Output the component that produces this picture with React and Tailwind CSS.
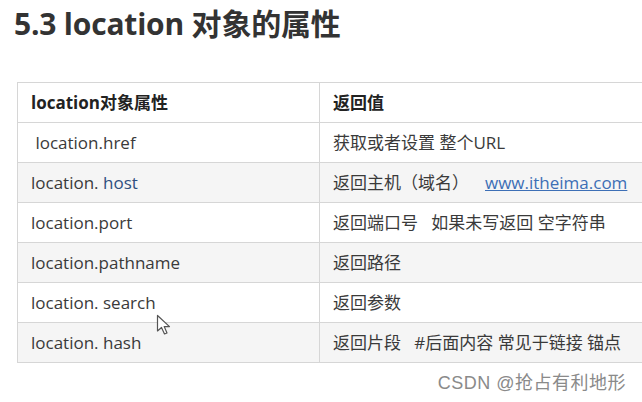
import React from 'react';

const rows = [
    { key: ' location.href', value: '获取或者设置 整个URL', shade: false },
    { key: 'location. ', blue: 'host', value: '返回主机（域名）', link: 'www.itheima.com', shade: true },
    { key: 'location.port', value: '返回端口号   如果未写返回 空字符串', shade: false },
    { key: 'location.pathname', value: '返回路径', shade: true },
    { key: 'location. search', value: '返回参数', shade: false },
    { key: 'location. hash', value: '返回片段   #后面内容 常见于链接 锚点', shade: true },
];

function Cursor() {
    return (
        <svg className="absolute left-[156px] top-[314px]" width="16" height="22" viewBox="0 0 16 22">
            <path d="M1.5 1.5 L1.5 17 L5.5 13.5 L8.5 20 L11 19 L8.2 12.6 L13.5 12.6 Z" fill="white" stroke="#555" strokeWidth="1.2" strokeLinejoin="round" />
        </svg>
    );
}

export default function App() {
    return (
        <div className="relative w-[642px] h-[402px] overflow-hidden bg-white text-[#3a3a3a]" style={{ fontFamily: '"Open Sans", "Noto Sans CJK SC", sans-serif' }}>
            {/* Title */}
            <h1 className="pl-[14px] pt-[2px] h-[82px] text-[30px] font-bold text-[#333] leading-[44px] tracking-[-0.2px]">
                5.3 location 对象的属性
            </h1>

            {/* Table */}
            <div className="ml-[17px] w-[640px] border border-[#d6d6d6] text-[17px]">
                <div className="flex h-[39px] items-center font-bold text-[#222]">
                    <div className="w-[302px] pl-[13px] border-r border-[#d6d6d6] h-full flex items-center">location对象属性</div>
                    <div className="pl-[13px]">返回值</div>
                </div>
                {rows.map((row, i) => (
                    <div key={i} className={`flex h-[40px] items-center border-t border-[#d6d6d6] ${row.shade ? 'bg-[#f5f5f5]' : 'bg-white'}`}>
                        <div className="w-[302px] pl-[13px] border-r border-[#d6d6d6] h-full flex items-center whitespace-pre">
                            {row.key}
                            {row.blue && <span className="text-[#2f4f7f]">{row.blue}</span>}
                        </div>
                        <div className="pl-[13px] whitespace-pre flex items-center">
                            {row.value}
                            {row.link && <span className="ml-[16px] text-[#3d6fb6] underline">{row.link}</span>}
                        </div>
                    </div>
                ))}
            </div>

            <Cursor />

            {/* Watermark */}
            <div className="absolute right-[16px] top-[370px] text-[18px] tracking-[0.5px] text-[#8a8a8a]" style={{ fontFamily: '"Liberation Sans", "Noto Sans CJK SC", sans-serif' }}>
                CSDN @抢占有利地形
            </div>
        </div>
    );
}
